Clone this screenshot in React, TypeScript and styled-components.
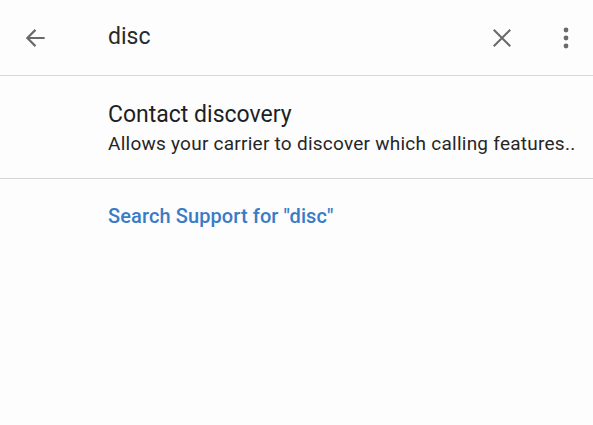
import React from 'react';
import styled, {createGlobalStyle} from 'styled-components';

const GlobalStyle = createGlobalStyle`
  html, body {
    margin: 0;
    padding: 0;
    background: #fdfdfd;
  }
  body {
    font-family: Roboto, "Noto Sans", Arial, sans-serif;
    color: #202124;
  }
`;

const Screen = styled.div`
  width: 593px;
  height: 425px;
  background: #fdfdfd;
  overflow: hidden;
`;

const Toolbar = styled.div`
  height: 76px;
  display: flex;
  align-items: center;
  border-bottom: 1.5px solid #d8d8d8;
  box-sizing: border-box;
`;

const IconButton = styled.div<{$width: number}>`
  width: ${p => p.$width}px;
  height: 74px;
  display: flex;
  align-items: center;
  justify-content: center;
  flex-shrink: 0;
`;

const Query = styled.div`
  flex: 1;
  font-size: 23px;
  padding-left: 36px;
  padding-bottom: 2px;
  color: #2a2a2a;
`;

const Result = styled.div`
  padding: 25px 0 0 108px;
  height: 103px;
  box-sizing: border-box;
  border-bottom: 1.5px solid #d4d4d4;
`;

const ResultTitle = styled.div`
  font-size: 23px;
  line-height: 28px;
  color: #1f1f1f;
`;

const ResultText = styled.div`
  font-size: 19px;
  line-height: 26px;
  letter-spacing: 0.25px;
  color: #262626;
  margin-top: 2px;
`;

const SupportLink = styled.div`
  padding: 25px 0 0 108px;
  font-size: 20px;
  font-weight: 500;
  letter-spacing: 0.1px;
  color: #3a7bc6;
`;

const App: React.FC = () => {
  return (
    <Screen>
      <GlobalStyle />
      <Toolbar>
        <IconButton $width={72}>
          <svg width="26" height="26" viewBox="0 0 24 24" fill="none">
            <path
              d="M20 12H4.5M11.5 4.5 4 12l7.5 7.5"
              stroke="#6a6a6a"
              strokeWidth="2"
            />
          </svg>
        </IconButton>
        <Query>disc</Query>
        <IconButton $width={74}>
          <svg width="22" height="22" viewBox="0 0 24 24" fill="none">
            <path d="M3 3l18 18M21 3 3 21" stroke="#6a6a6a" strokeWidth="2.3" />
          </svg>
        </IconButton>
        <IconButton $width={54}>
          <svg width="8" height="22" viewBox="0 0 8 22" fill="#6a6a6a">
            <circle cx="4" cy="3" r="2.4" />
            <circle cx="4" cy="11" r="2.4" />
            <circle cx="4" cy="19" r="2.4" />
          </svg>
        </IconButton>
      </Toolbar>
      <Result>
        <ResultTitle>Contact discovery</ResultTitle>
        <ResultText>Allows your carrier to discover which calling features..</ResultText>
      </Result>
      <SupportLink>Search Support for "disc"</SupportLink>
    </Screen>
  );
};

export default App;
